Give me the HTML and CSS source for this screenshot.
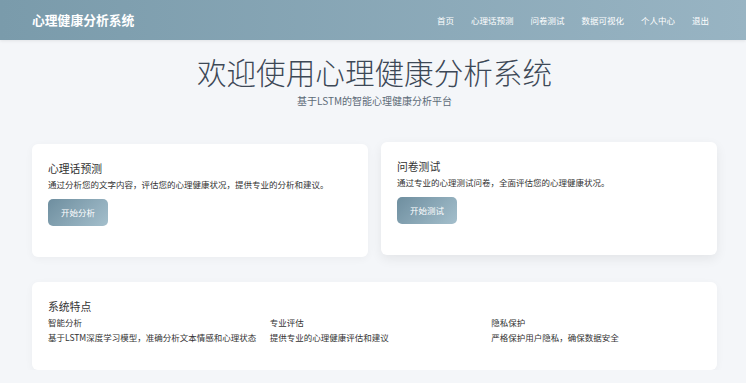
FILE: index.html
```html
<!DOCTYPE html>
<html lang="zh-CN">
<head>
    <meta charset="UTF-8">
    <meta name="viewport" content="width=device-width, initial-scale=1.0">
    <title>心理健康分析系统</title>
    <link rel="stylesheet" href="styles.css">
</head>
<body>
    <!-- ナビゲーション -->
    <nav class="navbar">
        <a class="brand" href="#">心理健康分析系统</a>
        <ul class="nav-links">
            <li><a href="#">首页</a></li>
            <li><a href="#">心理话预测</a></li>
            <li><a href="#">问卷测试</a></li>
            <li><a href="#">数据可视化</a></li>
            <li><a href="#">个人中心</a></li>
            <li><a href="#">退出</a></li>
        </ul>
    </nav>

    <div class="container">
        <header class="hero">
            <h1>欢迎使用心理健康分析系统</h1>
            <p class="subtitle">基于LSTM的智能心理健康分析平台</p>
        </header>

        <div class="card-row">
            <div class="card">
                <h3>心理话预测</h3>
                <p>通过分析您的文字内容，评估您的心理健康状况，提供专业的分析和建议。</p>
                <a class="btn" href="#">开始分析</a>
            </div>
            <div class="card card-hover">
                <h3>问卷测试</h3>
                <p>通过专业的心理测试问卷，全面评估您的心理健康状况。</p>
                <a class="btn" href="#">开始测试</a>
            </div>
        </div>

        <div class="card features">
            <h3>系统特点</h3>
            <div class="feature-grid">
                <div class="feature">
                    <h4>智能分析</h4>
                    <p>基于LSTM深度学习模型，准确分析文本情感和心理状态</p>
                </div>
                <div class="feature">
                    <h4>专业评估</h4>
                    <p>提供专业的心理健康评估和建议</p>
                </div>
                <div class="feature">
                    <h4>隐私保护</h4>
                    <p>严格保护用户隐私，确保数据安全</p>
                </div>
            </div>
        </div>
    </div>
</body>
</html>
```

FILE: styles.css
```css
:root {
    --nav-start: #7a9bab;
    --nav-end: #98b4c3;
    --bg-color: #f4f6f9;
    --text-color: #333;
    --title-color: #3d4856;
}

* {
    box-sizing: border-box;
    margin: 0;
    padding: 0;
}

body {
    font-family: "Noto Sans CJK SC", "Noto Sans", sans-serif;
    font-size: 8.5px;
    line-height: 1.5;
    color: var(--text-color);
    background-color: var(--bg-color);
}

a {
    text-decoration: none;
}

.navbar {
    height: 40px;
    display: flex;
    align-items: center;
    justify-content: space-between;
    padding: 0 37px 0 32px;
    background: linear-gradient(90deg, var(--nav-start), var(--nav-end));
    box-shadow: 0 1px 3px rgba(0,0,0,0.08);
}

.brand {
    color: white;
    font-size: 12.8px;
    font-weight: bold;
}

.nav-links {
    list-style: none;
    display: flex;
    gap: 17px;
}

.nav-links a {
    color: white;
    font-size: 8.5px;
}

.container {
    margin: 0 29px 0 32px;
}

.hero {
    text-align: center;
    padding-top: 14px;
}

.hero h1 {
    font-size: 29.6px;
    font-weight: 300;
    line-height: 1.2;
    color: var(--title-color);
}

.subtitle {
    font-size: 10px;
    color: #5d6b78;
    margin-top: 3px;
}

.card-row {
    display: grid;
    grid-template-columns: 1fr 1fr;
    gap: 13px;
    margin-top: 36px;
}

.card {
    background-color: white;
    border-radius: 6px;
    padding: 18px 16px 31px;
    box-shadow: 0 2px 8px rgba(0,0,0,0.04);
}

/* ホバー中のカード */
.card-hover {
    transform: translateY(-2px);
    box-shadow: 0 4px 12px rgba(0,0,0,0.07);
}

.card h3 {
    font-size: 10.8px;
    font-weight: normal;
    line-height: 1.2;
    color: var(--text-color);
    margin-bottom: 4px;
}

.btn {
    display: inline-block;
    margin-top: 8px;
    padding: 8px 13px;
    line-height: 11px;
    border-radius: 5px;
    color: white;
    font-size: 8.5px;
    background: linear-gradient(135deg, #6e8e9f, #a4bfcc);
}

.features {
    margin-top: 25px;
    padding: 18px 16px 26px;
}

.features h3 {
    margin-bottom: 3px;
}

.feature-grid {
    display: grid;
    grid-template-columns: repeat(3, 1fr);
    gap: 12px;
}

.feature h4 {
    font-size: 8.5px;
    font-weight: normal;
    margin-bottom: 2px;
}
```
